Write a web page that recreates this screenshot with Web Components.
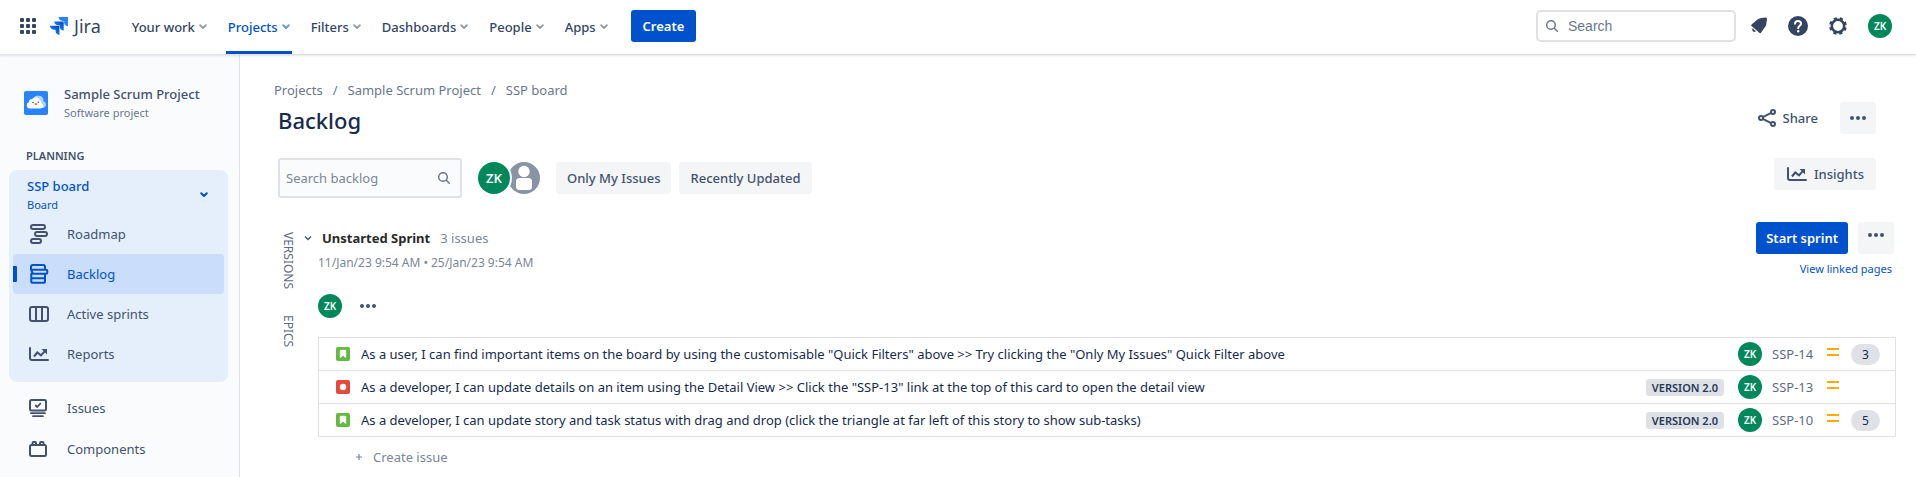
<!DOCTYPE html>
<html lang="en">
<head>
<meta charset="utf-8">
<title>Backlog - Jira</title>
<style>
body { margin: 0; background: #fff; color: #172b4d; font: 400 13px/20px "Noto Sans", sans-serif; }
</style>
</head>
<body>
<jira-app></jira-app>
<script>
const define = (name, html, setup) => {
  const template = document.createElement('template');
  template.innerHTML = html;
  customElements.define(name, class extends HTMLElement {
    connectedCallback() {
      if (this.shadowRoot) return;
      const root = this.attachShadow({ mode: 'open' });
      root.append(template.content.cloneNode(true));
      if (setup) setup(this, root);
    }
  });
};

/* name: [width, height, markup] */
const ICONS = {
  apps: [16, 16, [0, 6, 12].map(y => [0, 6, 12].map(x => `<rect x="${x}" y="${y}" width="4" height="4" rx="1" fill="currentColor"/>`).join('')).join('')],
  jira: [18, 18, '<defs><linearGradient id="g" x1="1" y1="0" x2="0.2" y2="0.8"><stop offset="0.2" stop-color="#0052cc"/><stop offset="1" stop-color="#2684ff"/></linearGradient></defs><path fill="#2684ff" d="M8.600 0H18v9.200c-2.200 0-3.900-1.700-3.900-3.900V3.900h-1.600C10.300 3.900 8.600 2.200 8.600 0z"/><path fill="url(#g)" d="M4.300 4.400h9.400v9.200c-2.200 0-3.900-1.700-3.900-3.900V8.300H8.200c-2.200 0-3.900-1.700-3.900-3.900z"/><path fill="url(#g)" d="M0 8.800h9.400V18c-2.200 0-3.900-1.700-3.900-3.900v-1.400H3.900C1.700 12.700 0 11 0 8.800z"/>'],
  chevron: [8, 6, '<path d="M1.200 1.200 4 4l2.800-2.800" fill="none" stroke="currentColor" stroke-width="2" stroke-linecap="round" stroke-linejoin="round"/>'],
  chevronThin: [8, 6, '<path d="M1 1.500l3 3 3-3" fill="none" stroke="currentColor" stroke-width="1.300"/>'],
  search: [12, 12, '<g fill="none" stroke="currentColor" stroke-width="1.500" stroke-linecap="round"><circle cx="5" cy="5" r="4.300"/><path d="M8.300 8.300l3 3"/></g>'],
  bell: [18, 18, '<path fill="currentColor" d="M1.300 7.800l6.200-5.200Q9 1.300 11.500 1l4-.6q1.700-.2 1.500 1.500l-.6 4.600q-.2 2-1.400 3.500l-4.200 6q-.6.600-1.200 0L1.300 8.800q-.4-.5 0-1z"/><path fill="none" stroke="currentColor" stroke-width="1.600" d="M3.200 11.600c-.8 1.800.6 3 2.200 2.200"/>'],
  help: [20, 20, '<circle cx="10" cy="10" r="10" fill="currentColor"/><path d="M7 7.800C7 6 8.300 5 10 5s3 1.100 3 2.700c0 2-2.800 2.200-2.800 4.500" fill="none" stroke="#fff" stroke-width="2" stroke-linecap="round"/><circle cx="10.200" cy="15.300" r="1.200" fill="#fff"/>'],
  gear: [20, 20, '<g fill="none" stroke="currentColor"><circle cx="10" cy="10" r="6.200" stroke-width="2.600"/><circle cx="10" cy="10" r="7.700" stroke-width="2.400" stroke-dasharray="3.200 2.848" transform="rotate(11 10 10)"/></g>'],
  project: [24, 24, '<rect width="24" height="24" rx="2" fill="#2684ff"/><path fill="#b3d4ff" d="M9 17h9.500a3.400 3.400 0 0 0 .8-6.700 4.300 4.300 0 0 0-4.600-5.600A4.500 4.500 0 0 0 10 7z"/><path fill="#fff" d="M5.600 17.500a3.400 3.400 0 0 1-.5-6.600 2.300 2.300 0 0 1 2.800-2.700 4.400 4.400 0 0 1 7.800.9 3 3 0 0 1 1.800 3.100 2.800 2.800 0 0 1-.6 5.300z"/><g fill="#42526e"><circle cx="9" cy="11.500" r=".8"/><circle cx="14.300" cy="11.300" r=".8"/></g><path fill="#ff5630" d="M10.500 12.300h2.800q-.2 1.900-1.400 1.900t-1.400-1.900z"/>'],
  roadmap: [20, 20, '<g fill="none" stroke="currentColor" stroke-width="2"><rect x="2" y="1" width="14" height="4" rx="2"/><rect x="6" y="8" width="12" height="4" rx="2"/><rect x="2" y="15" width="10" height="4" rx="2"/></g>'],
  backlog: [20, 20, '<g fill="none" stroke="currentColor" stroke-width="2" stroke-linejoin="round"><path d="M2 6V3q0-2 2-2h10q2 0 2 2v3"/><path d="M3 5.800h14q1.300 0 1.300 1.200v1.500q0 1.200-1.300 1.200h-1.300M2 5.800l2 3.900h12"/><path d="M3 9.700h-.7v7.500q0 1.600 1.500 1.600h10.700q1.500 0 1.500-1.600V9.700M3 14.200h13"/></g>'],
  board: [20, 16, '<path fill="none" stroke="currentColor" stroke-width="2" d="M3 1h14q2 0 2 2v10q0 2-2 2H3q-2 0-2-2V3q0-2 2-2zM7 1v14M13 1v14"/>'],
  reports: [20, 14, '<g fill="none" stroke="currentColor" stroke-width="2"><path stroke-linecap="round" d="M1 1v10q0 2 2 2h16"/><path d="M5 9.500l3.300-4L12 8.300l4.500-5"/></g><path fill="currentColor" d="M12.500 2H18v5.500z"/>'],
  issues: [18, 18, '<g fill="none" stroke="currentColor" stroke-width="2"><rect x="1" y="1" width="16" height="10.500" rx="1.500"/><path d="M6.200 6l2 2 3.600-3.800" stroke-width="1.800"/><path d="M2 14.200h14M4 17.200h10" stroke-width="1.700" stroke-linecap="round"/></g>'],
  components: [18, 16, '<g fill="none" stroke="currentColor" stroke-width="2"><rect x="1" y="4" width="16" height="11" rx="1.500"/><path d="M3.500 4V2q0-1 1-1h1.500q1 0 1 1v2M11 4V2q0-1 1-1h1.500q1 0 1 1v2"/></g>'],
  share: [18, 18, '<g fill="none" stroke="currentColor" stroke-width="2"><circle cx="3" cy="9" r="2"/><circle cx="15" cy="3" r="2"/><circle cx="15" cy="15" r="2"/><path d="M4.800 8.100l8.400-4.200M4.800 9.900l8.400 4.200"/></g>'],
  more: [16, 4, '<g fill="currentColor"><circle cx="2" cy="2" r="2"/><circle cx="8" cy="2" r="2"/><circle cx="14" cy="2" r="2"/></g>'],
  person: [32, 32, '<circle cx="16" cy="16" r="16" fill="#8993a4"/><circle cx="16" cy="9.500" r="5.700" fill="#fff"/><rect x="8" y="16" width="16" height="12" rx="3.500" fill="#fff"/>'],
  story: [14, 14, '<rect width="14" height="14" rx="2" fill="#63ba3c"/><path d="M4.300 3.300h5.400v7.200L7 8.200l-2.700 2.300z" fill="#fff" stroke="#fff" stroke-width="1"/>'],
  bug: [14, 14, '<rect width="14" height="14" rx="2" fill="#e5493a"/><circle cx="7" cy="7" r="3.200" fill="#fff"/>'],
  medium: [12, 16, '<path fill="#ffab00" d="M0 2h12v2H0zM0 8h12v2H0z"/>'],
  plus: [8, 8, '<path d="M4 1v6M1 4h6" stroke="currentColor" stroke-width="1.200"/>']
};

define('ui-icon', `<style>
:host { display: inline-flex; flex: none; }
svg { display: block; overflow: visible; }
</style>`, (host, root) => {
  const [w, h, body] = ICONS[host.getAttribute('name')];
  root.innerHTML += `<svg width="${w}" height="${h}" viewBox="0 0 ${w} ${h}" aria-hidden="true">${body}</svg>`;
});

define('user-avatar', `<style>
:host { display: inline-flex; flex: none; align-items: center; justify-content: center; width: 24px; height: 24px; border-radius: 50%; background: #00875a; color: #fff; font-size: 10px; line-height: 16px; font-weight: 600; }
:host([large]) { width: 32px; height: 32px; font-size: 13px; }
</style><slot></slot>`);

define('ui-button', `<style>
:host { display: inline-flex; flex: none; }
button { display: inline-flex; align-items: center; justify-content: center; gap: 7px; box-sizing: border-box; height: 32px; min-width: 36px; margin: 0; padding: 0 10px; border: 0; border-radius: 3px; background: #f4f5f7; color: #42526e; font: inherit; font-weight: 500; white-space: nowrap; cursor: pointer; }
:host([primary]) button { background: #0052cc; color: #fff; font-weight: 600; }
:host([wide]) button { padding: 0 12px; }
:host([filter]) button { padding: 0 11px; }
:host([insights]) button { padding: 0 12px 0 13px; }
:host([subtle]) button { background: none; }
:host([raised]) button { padding-bottom: 6px; }
</style><button type="button"><slot></slot></button>`, (host, root) => {
  const label = host.getAttribute('label');
  if (label) root.querySelector('button').setAttribute('aria-label', label);
});

define('search-field', `<style>
:host { display: flex; align-items: center; box-sizing: border-box; height: 32px; width: 200px; padding: 0 8px; gap: 10px; border: 2px solid #dfe1e6; border-radius: 5px; background: #fff; color: #6b778c; }
:host([backlog]) { width: 184px; height: 40px; padding: 0 10px 0 6px; border-radius: 3px; background: #fafbfc; flex-direction: row-reverse; }
input { flex: 1; min-width: 0; width: 0; padding: 0; border: 0; outline: 0; background: none; color: inherit; font: inherit; }
:host(:not([backlog])) input { font: 14px/20px "Liberation Sans", sans-serif; }
input::placeholder { color: #6b778c; opacity: 1; }
:host([backlog]) input::placeholder { color: #7a869a; }
</style><ui-icon name="search"></ui-icon><input type="text">`, (host, root) => {
  const input = root.querySelector('input');
  input.placeholder = host.getAttribute('placeholder');
  input.setAttribute('aria-label', input.placeholder);
});

define('nav-item', `<style>
:host { display: flex; align-self: stretch; }
button { display: flex; align-items: center; gap: 4px; padding: 0 2px; border: 0; background: none; color: #344563; font: inherit; font-weight: 500; cursor: pointer; white-space: nowrap; }
ui-icon { color: #97a0af; }
:host([current]) button { color: #0052cc; box-shadow: inset 0 -3px #0052cc; }
:host([current]) ui-icon { color: #6b9be3; }
</style><button type="button" aria-haspopup="true"><slot></slot><ui-icon name="chevron"></ui-icon></button>`);

define('top-bar', `<style>
:host { display: flex; align-items: center; justify-content: space-between; box-sizing: border-box; height: 54px; padding: 0 24px 2px 20px; background: #fff; position: relative; box-shadow: 0 1px #dfe1e6, 0 2px 2px #091e4220; color: #344563; }
div, nav { display: flex; align-items: center; align-self: stretch; }
nav { gap: 16px; padding: 0 20px 0 28px; margin-bottom: -2px; padding-bottom: 0; }
.logo { display: flex; align-items: center; gap: 6px; margin-left: 14px; color: #344563; font-size: 18px; line-height: 24px; text-decoration: none; }
.icon { display: flex; padding: 0; border: 0; background: none; color: inherit; cursor: pointer; }
nav { gap: 17px; padding: 0 21px 0 29px; }
.right { gap: 20px; }
search-field { margin-right: -6px; }
</style>
<div><button class="icon" aria-label="App switcher"><ui-icon name="apps"></ui-icon></button>
<a class="logo" href="#"><ui-icon name="jira"></ui-icon>Jira</a>
<nav><nav-item>Your work</nav-item><nav-item current>Projects</nav-item><nav-item>Filters</nav-item><nav-item>Dashboards</nav-item><nav-item>People</nav-item><nav-item>Apps</nav-item></nav>
<ui-button primary wide>Create</ui-button></div>
<div class="right"><search-field placeholder="Search"></search-field>
<button class="icon" aria-label="Notifications"><ui-icon name="bell"></ui-icon></button>
<button class="icon" aria-label="Help"><ui-icon name="help"></ui-icon></button>
<button class="icon" aria-label="Settings"><ui-icon name="gear"></ui-icon></button>
<user-avatar>ZK</user-avatar></div>`);

define('side-item', `<style>
:host { display: block; }
a { display: flex; align-items: center; height: 40px; padding-left: 16px; border-radius: 4px; color: #42526e; text-decoration: none; position: relative; }
.icon { display: flex; width: 38px; }
:host([current]) a { background: #caddfb; color: #0052cc; }
:host([current]) a::before { content: ""; position: absolute; left: 0; top: 12px; width: 4px; height: 16px; background: #0052cc; border-radius: 0 1px 1px 0; }
</style><a href="#"><span class="icon"></span><slot></slot></a>`, (host, root) => {
  root.querySelector('.icon').innerHTML = `<ui-icon name="${host.getAttribute('icon')}"></ui-icon>`;
});

define('side-bar', `<style>
:host { display: block; flex: none; box-sizing: border-box; width: 240px; padding: 30px 11px 0 9px; border-right: 1px solid #dfe1e6; background: #fafbfc; color: #42526e; }
.project { display: flex; gap: 16px; align-items: center; padding-left: 15px; }
.project b, .board b { display: block; font-weight: 500; line-height: 20px; }
small { display: block; font-size: 11px; line-height: 18px; color: #6b778c; }
h2 { margin: 25px 0 5px 17px; font-size: 11px; line-height: 18px; font-weight: 600; }
.group { box-sizing: border-box; padding: 6px 4px 8px; border-radius: 8px; background: #e5effc; }
.board { display: flex; align-items: center; justify-content: space-between; width: 100%; margin: 0; padding: 0 16px 0 14px; border: 0; background: none; color: #0052cc; font: inherit; text-align: left; cursor: pointer; }
.board small { color: #0052cc; }
.items { display: flex; flex-direction: column; }
.more { gap: 1px; margin-top: 6px; padding: 0 4px; }
</style>
<div class="project"><ui-icon name="project"></ui-icon><div><b>Sample Scrum Project</b><small>Software project</small></div></div>
<h2>PLANNING</h2>
<div class="group">
<button class="board" aria-expanded="true"><span><b>SSP board</b><small>Board</small></span><ui-icon name="chevron"></ui-icon></button>
<div class="items"><side-item icon="roadmap">Roadmap</side-item><side-item icon="backlog" current>Backlog</side-item><side-item icon="board">Active sprints</side-item><side-item icon="reports">Reports</side-item></div></div>
<div class="items more"><side-item icon="issues">Issues</side-item><side-item icon="components">Components</side-item></div>`);

define('page-header', `<style>
:host { display: block; padding: 0 20px 0 0; }
.row { display: flex; justify-content: space-between; }
.head { align-items: flex-end; margin-bottom: 24px; }
nav { display: flex; gap: 10px; color: #6b778c; }
nav a { color: inherit; text-decoration: none; }
h1 { margin: 6px 0 0 4px; font-size: 22px; line-height: 28px; font-weight: 500; }
.tools { padding-left: 4px; align-items: flex-start; }
.left, .actions { display: flex; align-items: center; gap: 8px; }
.actions { gap: 12px; }
.people { display: flex; padding: 0 8px; }
.people ui-icon { margin-left: -2px; }
.people user-avatar { position: relative; box-shadow: 0 0 0 2px #fff; }
</style>
<div class="row head"><div><nav aria-label="Breadcrumbs"><a href="#">Projects</a><span>/</span><a href="#">Sample Scrum Project</a><span>/</span><a href="#">SSP board</a></nav><h1>Backlog</h1></div>
<div class="actions"><ui-button subtle><ui-icon name="share"></ui-icon>Share</ui-button><ui-button label="More actions"><ui-icon name="more"></ui-icon></ui-button></div></div>
<div class="row tools"><div class="left"><search-field backlog placeholder="Search backlog"></search-field><span class="people"><user-avatar large>ZK</user-avatar><ui-icon name="person"></ui-icon></span><ui-button filter>Only My Issues</ui-button><ui-button filter>Recently Updated</ui-button></div>
<ui-button insights><ui-icon name="reports"></ui-icon>Insights</ui-button></div>`);

define('issue-row', `<style>
:host { display: flex; align-items: center; box-sizing: border-box; height: 33px; padding: 0 15px 0 17px; border-bottom: 1px solid #dfe1e6; }
.type { display: flex; }
.summary { flex: 1; min-width: 0; margin-left: 11px; overflow: hidden; white-space: nowrap; text-overflow: ellipsis; }
.version { padding: 0 6px; margin-right: 14px; border-radius: 3px; background: #dfe1e6; color: #253858; font-size: 11px; line-height: 17px; font-weight: 600; }
a { width: 45px; margin: 0 10px; color: #5e6c84; text-decoration: none; white-space: nowrap; }
.points { display: flex; justify-content: flex-end; width: 41px; }
.points b { width: 29px; border-radius: 11px; background: #dfe1e6; font-size: 12px; line-height: 21px; font-weight: 400; text-align: center; }
</style>
<span class="type"></span><span class="summary"><slot></slot></span><span class="version"></span>
<user-avatar>ZK</user-avatar><a href="#"></a><ui-icon name="medium"></ui-icon><span class="points"></span>`, (host, root) => {
  const $ = s => root.querySelector(s);
  $('.type').innerHTML = `<ui-icon name="${host.getAttribute('type')}"></ui-icon>`;
  const version = host.getAttribute('version');
  if (version) $('.version').textContent = version; else $('.version').remove();
  $('a').textContent = host.getAttribute('key');
  const points = host.getAttribute('points');
  if (points) $('.points').innerHTML = `<b>${points}</b>`;
});

define('sprint-panel', `<style>
:host { display: flex; margin-top: 24px; }
.tabs { display: flex; flex-direction: column; align-items: center; gap: 26px; width: 20px; padding-top: 10px; margin-left: 4px; }
.tabs button { padding: 0; border: 0; background: none; writing-mode: vertical-rl; color: #5e6c84; font: inherit; font-size: 12px; line-height: 20px; cursor: pointer; }
.sprint { flex: 1; min-width: 0; margin-left: 4px; padding-left: 16px; }
header { display: flex; justify-content: space-between; align-items: flex-start; }
.title { display: flex; align-items: center; gap: 10px; height: 32px; margin-left: -14px; }
h2 { margin: 0; font-size: 13px; line-height: 20px; font-weight: 700; color: #292929; }
.muted, .dates { color: #7a869a; }
.dates { display: flex; gap: 3px; font-size: 12px; line-height: 18px; }
.side { display: flex; flex-direction: column; align-items: flex-end; gap: 6px; padding-right: 2px; }
.side div { display: flex; gap: 10px; }
.side a { margin-right: 2px; color: #0052cc; font-size: 11px; line-height: 18px; text-decoration: none; }
.people { display: flex; align-items: center; gap: 8px; height: 24px; margin: 16px 0 19px; }
.list { border: 1px solid #dfe1e6; border-bottom: 0; }
.create { display: flex; align-items: center; gap: 10px; margin: 10px 0 0 37px; padding: 0; border: 0; background: none; color: #7a869a; font: inherit; cursor: pointer; }
.toggle { display: flex; padding: 0; border: 0; background: none; color: #42526e; }
</style>
<div class="tabs"><button>VERSIONS</button><button>EPICS</button></div>
<section class="sprint"><header><div><div class="title"><button class="toggle" aria-label="Collapse sprint"><ui-icon name="chevronThin"></ui-icon></button><h2>Unstarted Sprint</h2><span class="muted">3 issues</span></div>
<div class="dates"><span>11/Jan/23 9:54 AM</span><span>•</span><span>25/Jan/23 9:54 AM</span></div></div>
<div class="side"><div><ui-button primary>Start sprint</ui-button><ui-button raised label="Sprint actions"><ui-icon name="more"></ui-icon></ui-button></div><a href="#">View linked pages</a></div></header>
<div class="people"><user-avatar>ZK</user-avatar><ui-button subtle label="Workload"><ui-icon name="more"></ui-icon></ui-button></div>
<div class="list">
<issue-row type="story" key="SSP-14" points="3">As a user, I can find important items on the board by using the customisable "Quick Filters" above &gt;&gt; Try clicking the "Only My Issues" Quick Filter above</issue-row>
<issue-row type="bug" key="SSP-13" version="VERSION 2.0">As a developer, I can update details on an item using the Detail View &gt;&gt; Click the "SSP-13" link at the top of this card to open the detail view</issue-row>
<issue-row type="story" key="SSP-10" version="VERSION 2.0" points="5">As a developer, I can update story and task status with drag and drop (click the triangle at far left of this story to show sub-tasks)</issue-row>
</div>
<button class="create"><ui-icon name="plus"></ui-icon>Create issue</button></section>`);

define('jira-app', `<style>
:host { display: flex; flex-direction: column; min-height: 100vh; }
.body { display: flex; flex: 1; }
main { flex: 1; min-width: 0; padding: 26px 20px 0 34px; }
</style>
<top-bar></top-bar><div class="body"><side-bar></side-bar><main><page-header></page-header><sprint-panel></sprint-panel></main></div>`);
</script>
</body>
</html>
